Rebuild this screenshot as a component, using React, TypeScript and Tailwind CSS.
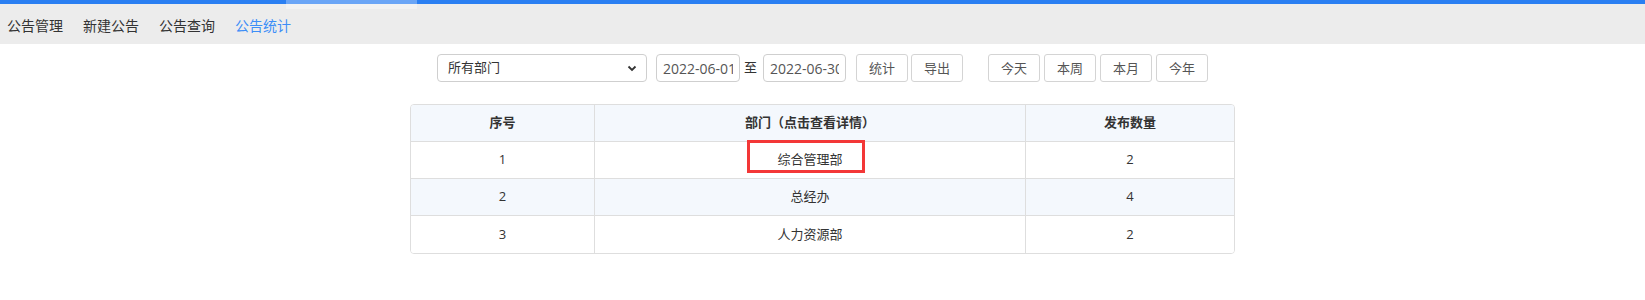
import React from "react";

const font = { fontFamily: '"Open Sans", "Noto Sans CJK SC", sans-serif' };

function Btn({ children, className = "" }: { children: React.ReactNode; className?: string }) {
  return (
    <button
      className={
        "h-[28px] w-[52px] rounded-[3px] border border-[#d4d4d4] bg-white text-[13px] text-[#555] leading-none flex items-center justify-center " +
        className
      }
    >
      {children}
    </button>
  );
}

export default function App() {
  const rows = [
    { n: "1", d: "综合管理部", c: "2", alt: false, mark: true },
    { n: "2", d: "总经办", c: "4", alt: true, mark: false },
    { n: "3", d: "人力资源部", c: "2", alt: false, mark: false },
  ];
  return (
    <div className="w-[1645px] h-[300px] bg-white text-[#333]" style={font}>
      {/* top bar */}
      <div className="relative">
        <div className="h-[4px] bg-[#2a7ff2]" />
        <div className="h-[40px] bg-[#ececec] flex items-center pl-[7px] pt-[3px] gap-[20px] text-[14px]">
          <span className="text-[#333]">公告管理</span>
          <span className="text-[#333]">新建公告</span>
          <span className="text-[#333]">公告查询</span>
          <span className="text-[#3d8ef7]">公告统计</span>
        </div>
        <div className="absolute left-[286px] top-0 w-[131px] h-[9px] bg-white/30" />
      </div>

      {/* controls */}
      <div className="flex justify-center items-center mt-[10px] h-[28px]">
        <div className="flex items-center">
          <div className="w-[210px] h-[28px] rounded-[4px] border border-[#cfcfcf] flex items-center justify-between pl-[10px] pr-[9px] text-[13px] text-[#333]">
            <span>所有部门</span>
            <svg width="10" height="7" viewBox="0 0 10 7">
              <path d="M1.5 1.5 L5 5 L8.5 1.5" fill="none" stroke="#333" strokeWidth="1.8" />
            </svg>
          </div>
          <input
            readOnly
            value="2022-06-01"
            className="ml-[9px] w-[84px] h-[28px] rounded-[4px] border border-[#cfcfcf] px-[6px] text-[14px] text-[#555] outline-none"
          />
          <span className="ml-[4px] mr-[6px] text-[13px] text-[#333]">至</span>
          <input
            readOnly
            value="2022-06-30"
            className="w-[83px] h-[28px] rounded-[4px] border border-[#cfcfcf] px-[6px] text-[14px] text-[#555] outline-none"
          />
          <Btn className="ml-[10px]">统计</Btn>
          <Btn className="ml-[3px] w-[51px]">导出</Btn>
          <Btn className="ml-[25px]">今天</Btn>
          <Btn className="ml-[4px]">本周</Btn>
          <Btn className="ml-[4px]">本月</Btn>
          <Btn className="ml-[4px]">今年</Btn>
        </div>
      </div>

      {/* table */}
      <div className="flex justify-center mt-[22px]">
        <div className="w-[825px] border border-[#dedede] rounded-[4px] overflow-hidden text-[13px]">
          <div className="grid grid-cols-[184px_431px_1fr] h-[37px] bg-[#f4f8fd] border-b border-[#dedede] font-bold text-[#333]">
            <div className="flex items-center justify-center border-r border-[#dedede]">序号</div>
            <div className="flex items-center justify-center border-r border-[#dedede]">部门（点击查看详情）</div>
            <div className="flex items-center justify-center">发布数量</div>
          </div>
          {rows.map((r, i) => (
            <div
              key={r.n}
              className={
                "grid grid-cols-[184px_431px_1fr] h-[37px] text-[#333] " +
                (r.alt ? "bg-[#f4f8fd] " : "bg-white ") +
                (i < rows.length - 1 ? "border-b border-[#dedede]" : "h-[36px]")
              }
            >
              <div className="flex items-center justify-center border-r border-[#dedede]">{r.n}</div>
              <div className="flex items-center justify-center border-r border-[#dedede]">
                <span className="relative">
                  {r.d}
                  {r.mark && (
                    <span className="absolute left-[-30px] right-[-22px] top-[-10px] bottom-[-3px] border-[3px] border-[#f33737]" />
                  )}
                </span>
              </div>
              <div className="flex items-center justify-center">{r.c}</div>
            </div>
          ))}
        </div>
      </div>
    </div>
  );
}
